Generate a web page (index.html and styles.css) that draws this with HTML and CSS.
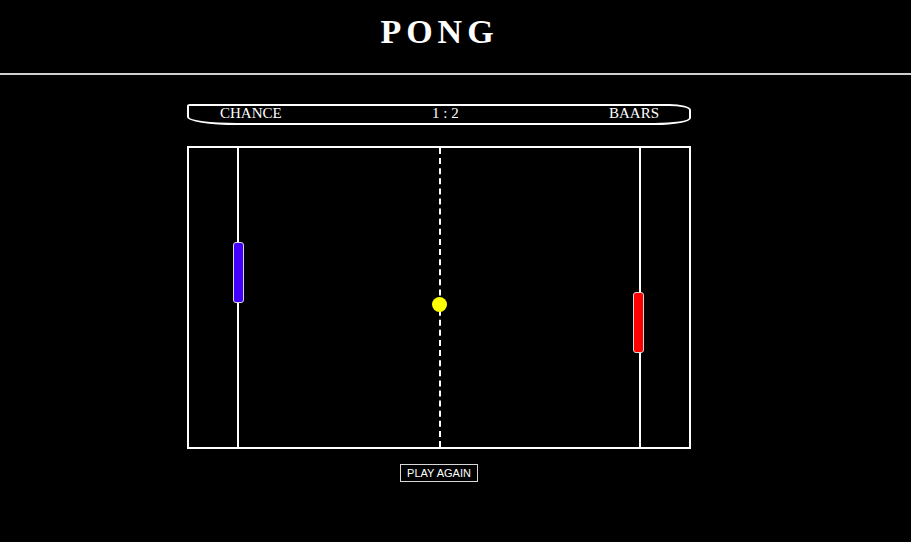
FILE: index.html
```html
<!DOCTYPE html>
<html lang="en">
<head>
<meta charset="utf-8">
<title>Pong</title>
<link rel="stylesheet" href="styles.css">
</head>
<body>
<header class="header">
  <h1 class="title">PONG</h1>
</header>
<div class="rule"></div>
<main class="main">
  <div class="scorebar">
    <span class="player">CHANCE</span>
    <span class="score">1 : 2</span>
    <span class="player">BAARS</span>
  </div>
  <div class="board">
    <div class="court">
      <div class="gap-side"></div>
      <div class="line"></div>
      <div class="half"></div>
      <div class="line dashed"></div>
      <div class="half"></div>
      <div class="line"></div>
      <div class="gap-side"></div>
    </div>
    <div class="paddle paddle-left"></div>
    <div class="paddle paddle-right"></div>
    <div class="ball"></div>
  </div>
  <button class="play-again" type="button">PLAY AGAIN</button>
</main>
</body>
</html>
```
FILE: styles.css
```css
html, body {
  margin: 0;
  padding: 0;
  background: #000;
}

body {
  width: 911px;
  height: 542px;
  overflow: hidden;
  color: #fff;
  font-family: "Liberation Serif", "Times New Roman", serif;
}

.header {
  padding: 12px 33px 21px 0;
}

.title {
  margin: 0;
  padding-left: 1px;
  text-align: center;
  font-family: "Liberation Serif", "Times New Roman", serif;
  font-weight: bold;
  font-size: 34px;
  line-height: 40px;
  letter-spacing: 5px;
  color: #fff;
}

.rule {
  height: 2px;
  background: #cfcfcf;
}

.main {
  padding-right: 33px;
  padding-top: 29px;
  display: flex;
  flex-direction: column;
  align-items: center;
}

.scorebar {
  box-sizing: border-box;
  width: 504px;
  height: 21px;
  border: 2px solid #fff;
  border-radius: 3px 22px 36px 50px / 2px 6px 7px 8px;
  padding: 0 30px 3px 31px;
  display: flex;
  justify-content: space-between;
  font-size: 15px;
  line-height: 14px;
  color: #fff;
}

.board {
  position: relative;
  margin-top: 21px;
  width: 500px;
  height: 299px;
  border: 2px solid #fff;
}

.court {
  display: grid;
  grid-template-columns: 48px 2px 200px 2px 198px 2px 48px;
  height: 100%;
}

.line {
  background: #fff;
}

.line.dashed {
  background: none;
  border-left: 2px dashed #fff;
}

.paddle {
  position: absolute;
  box-sizing: border-box;
  width: 11px;
  height: 61px;
  border: 1px solid #d8d8d8;
  border-radius: 3px;
}

.paddle-left {
  left: 44px;
  top: 94px;
  background: #4400ff;
}

.paddle-right {
  left: 444px;
  top: 144px;
  background: #ff0000;
}

.ball {
  position: absolute;
  left: 243px;
  top: 149px;
  width: 15px;
  height: 15px;
  border-radius: 50%;
  background: #ffff00;
}

.play-again {
  margin-top: 15px;
  box-sizing: border-box;
  height: 18px;
  padding: 0 6px;
  border: 1px solid #d8d8d8;
  border-radius: 0;
  background: #000;
  color: #fff;
  font-family: "Liberation Sans", Arial, sans-serif;
  font-size: 11px;
  line-height: 16px;
  cursor: pointer;
}
```
